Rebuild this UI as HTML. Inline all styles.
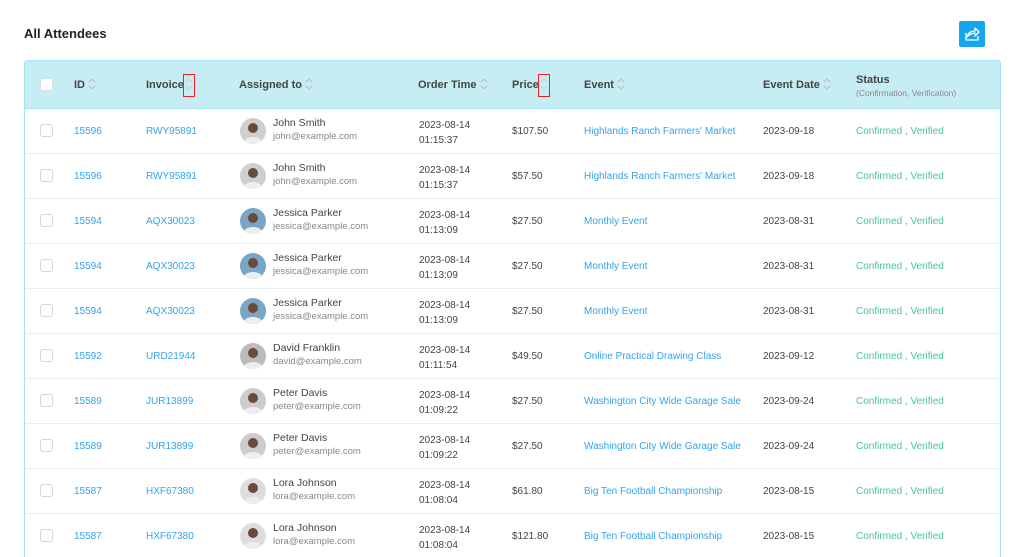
<!DOCTYPE html>
<html><head><meta charset="utf-8"><style>
*{margin:0;padding:0;box-sizing:border-box}
html,body{width:1024px;height:557px;overflow:hidden}
body{background:#fff;font-family:"Liberation Sans",sans-serif;color:#333;position:relative}
h1{position:absolute;left:24px;top:26px;font-size:13px;font-weight:bold;color:#222}
.btn{position:absolute;left:959px;top:21px;width:26px;height:26px;background:#16a6ee;border-radius:2px}
.tbl{position:absolute;left:24px;top:60px;width:977px;height:520px;border:1px solid #a9e3ef;border-radius:3px;overflow:hidden}
.hd{height:48px;background:#c6edf4;border-bottom:1px solid #a9e3ef;position:relative}
.row{height:45px;border-bottom:1px solid #e6eef0;position:relative;font-size:10px}
.c{position:absolute}
.hd .c{font-size:11px;font-weight:bold;color:#444;top:17px}
.cb{position:absolute;left:15px;width:13px;height:13px;border:1px solid #d6d6d6;border-radius:3px;background:#fff}
.hd .cb{top:17px;border-color:#ddd}
.row .cb{top:15px}
.s{display:inline-block;width:8px;height:14px;vertical-align:middle;margin-left:3px;position:relative;top:-1px}
.red{position:absolute;border:1px solid #e22;width:12px;height:23px;top:13px}
.blue{color:#33a4ea}
.grn{color:#45c98f}
.av{position:absolute;left:215px;top:9px;width:26px;height:26px;border-radius:50%;background:#ddd;overflow:hidden}
.nm{position:absolute;left:248px;top:8px;font-size:10.5px;color:#444;line-height:13px}
.nm span{display:block;font-size:9.5px;color:#888}
.ot{position:absolute;left:394px;top:9px;line-height:15px;color:#444}
.mid{top:17px}
</style></head><body>
<h1>All Attendees</h1>
<div class="btn"><svg width="26" height="26" viewBox="0 0 26 26"><path d="M7 12v7h12v-4M8 16c1-4 4-6 8-6V7l4 4-4 4v-3c-3 0-5 1-8 4z" fill="none" stroke="#fff" stroke-width="1.3" stroke-linejoin="round"/></svg></div>
<div class="tbl">
<div class="hd">
<div class="cb"></div>
<div class="c" style="left:49px">ID<svg class="s" viewBox="0 0 8 14"><path d="M1 5l3-3 3 3M1 9l3 3 3-3" fill="none" stroke="#bbb"/></svg></div>
<div class="c" style="left:121px">Invoice<svg class="s" style="margin-left:1px" viewBox="0 0 8 14"><path d="M1 5l3-3 3 3M1 9l3 3 3-3" fill="none" stroke="#ccc"/></svg></div>
<div class="red" style="left:158px"></div>
<div class="c" style="left:214px">Assigned to<svg class="s" viewBox="0 0 8 14"><path d="M1 5l3-3 3 3M1 9l3 3 3-3" fill="none" stroke="#bbb"/></svg></div>
<div class="c" style="left:393px">Order Time<svg class="s" viewBox="0 0 8 14"><path d="M1 5l3-3 3 3M1 9l3 3 3-3" fill="none" stroke="#bbb"/></svg></div>
<div class="c" style="left:487px">Price<svg class="s" style="margin-left:1px" viewBox="0 0 8 14"><path d="M1 5l3-3 3 3M1 9l3 3 3-3" fill="none" stroke="#ccc"/></svg></div>
<div class="red" style="left:513px"></div>
<div class="c" style="left:559px">Event<svg class="s" viewBox="0 0 8 14"><path d="M1 5l3-3 3 3M1 9l3 3 3-3" fill="none" stroke="#bbb"/></svg></div>
<div class="c" style="left:738px">Event Date<svg class="s" viewBox="0 0 8 14"><path d="M1 5l3-3 3 3M1 9l3 3 3-3" fill="none" stroke="#bbb"/></svg></div>
<div class="c" style="left:831px;top:13px">Status<div style="font-size:8.5px;font-weight:normal;color:#888;margin-top:2px">(Confirmation, Verification)</div></div>
</div>
<div id="rows"></div>
</div>
<script>
var d=[["15596","RWY95891","John Smith","john","01:15:37","$107.50","Highlands Ranch Farmers' Market","2023-09-18","#cfcfcf"],
["15596","RWY95891","John Smith","john","01:15:37","$57.50","Highlands Ranch Farmers' Market","2023-09-18","#cfcfcf"],
["15594","AQX30023","Jessica Parker","jessica","01:13:09","$27.50","Monthly Event","2023-08-31","#7aa6c6"],
["15594","AQX30023","Jessica Parker","jessica","01:13:09","$27.50","Monthly Event","2023-08-31","#7aa6c6"],
["15594","AQX30023","Jessica Parker","jessica","01:13:09","$27.50","Monthly Event","2023-08-31","#7aa6c6"],
["15592","URD21944","David Franklin","david","01:11:54","$49.50","Online Practical Drawing Class","2023-09-12","#bbb"],
["15589","JUR13899","Peter Davis","peter","01:09:22","$27.50","Washington City Wide Garage Sale","2023-09-24","#ccc"],
["15589","JUR13899","Peter Davis","peter","01:09:22","$27.50","Washington City Wide Garage Sale","2023-09-24","#ccc"],
["15587","HXF67380","Lora Johnson","lora","01:08:04","$61.80","Big Ten Football Championship","2023-08-15","#ddd"],
["15587","HXF67380","Lora Johnson","lora","01:08:04","$121.80","Big Ten Football Championship","2023-08-15","#ddd"]];
var h="";d.forEach(function(r){h+='<div class="row"><div class="cb"></div>'+
'<div class="c blue mid" style="left:49px">'+r[0]+'</div>'+
'<div class="c blue mid" style="left:121px">'+r[1]+'</div>'+
'<div class="av" style="background:'+r[8]+'"><svg width="26" height="26"><circle cx="13" cy="10" r="5" fill="#6b4a3a"/><ellipse cx="13" cy="26" rx="10" ry="7" fill="#eee"/></svg></div>'+
'<div class="nm">'+r[2]+'<span>'+r[3]+'@example.com</span></div>'+
'<div class="ot">2023-08-14<br>'+r[4]+'</div>'+
'<div class="c mid" style="left:487px;color:#444">'+r[5]+'</div>'+
'<div class="c blue mid" style="left:559px">'+r[6]+'</div>'+
'<div class="c mid" style="left:738px;color:#444">'+r[7]+'</div>'+
'<div class="c grn mid" style="left:831px">Confirmed , Verified</div></div>';});
document.getElementById("rows").innerHTML=h;
</script>
</body></html>
